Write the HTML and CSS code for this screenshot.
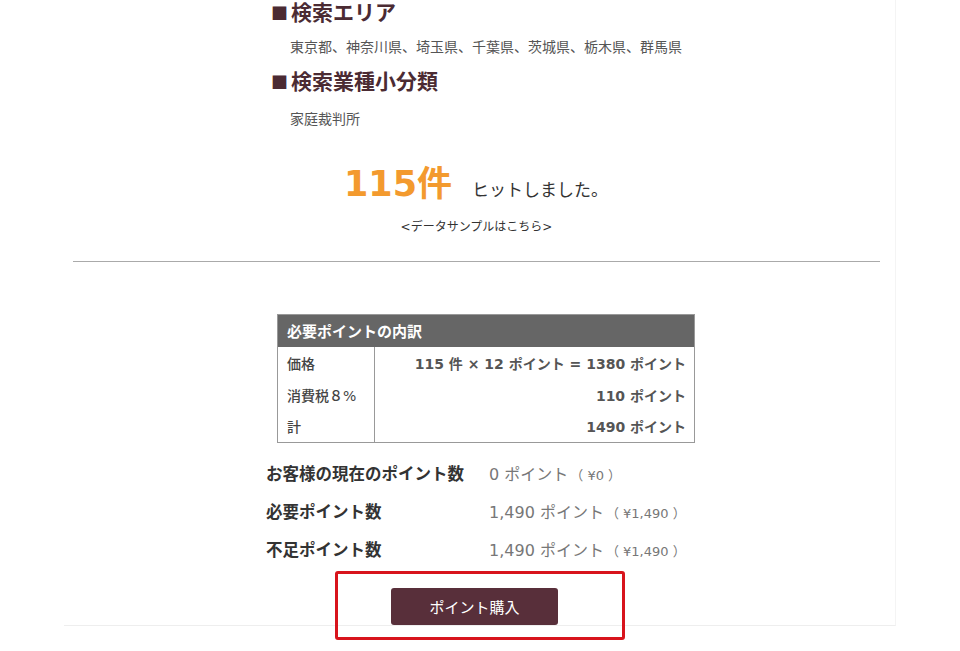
FILE: index.html
```html
<!DOCTYPE html>
<html lang="ja">
<head>
    <meta charset="UTF-8">
    <meta name="viewport" content="width=device-width, initial-scale=1.0">
    <title>ポイント購入</title>
    <link rel="stylesheet" href="styles.css">
</head>
<body>
    <div class="panel">
        <!-- 検索条件 -->
        <div class="search-info">
            <h2 class="cond-title"><span class="mark">■</span>検索エリア</h2>
            <p class="cond-text">東京都、神奈川県、埼玉県、千葉県、茨城県、栃木県、群馬県</p>
            <h2 class="cond-title"><span class="mark">■</span>検索業種小分類</h2>
            <p class="cond-text">家庭裁判所</p>
        </div>

        <div class="hit-line">
            <span class="hit-count">115件</span>
            <span class="hit-text">ヒットしました。</span>
        </div>
        <p class="sample-link">&lt;データサンプルはこちら&gt;</p>

        <hr class="divider">

        <!-- 内訳 -->
        <table class="breakdown">
            <thead>
                <tr>
                    <th colspan="2">必要ポイントの内訳</th>
                </tr>
            </thead>
            <tbody>
                <tr>
                    <td class="label">価格</td>
                    <td class="value">115 件 × 12 ポイント = 1380 ポイント</td>
                </tr>
                <tr>
                    <td class="label">消費税８%</td>
                    <td class="value">110 ポイント</td>
                </tr>
                <tr>
                    <td class="label">計</td>
                    <td class="value">1490 ポイント</td>
                </tr>
            </tbody>
        </table>

        <div class="summary">
            <div class="summary-label">お客様の現在のポイント数</div>
            <div class="summary-value">0 ポイント<span class="yen">（ ¥0 ）</span></div>
            <div class="summary-label">必要ポイント数</div>
            <div class="summary-value">1,490 ポイント<span class="yen">（ ¥1,490 ）</span></div>
            <div class="summary-label">不足ポイント数</div>
            <div class="summary-value">1,490 ポイント<span class="yen">（ ¥1,490 ）</span></div>
        </div>

        <div class="buy-area">
            <a href="#" class="buy-button">ポイント購入</a>
            <div class="highlight"></div>
        </div>
    </div>
</body>
</html>
```

FILE: styles.css
```css
* {
    margin: 0;
    padding: 0;
    box-sizing: border-box;
}

body {
    background-color: #fff;
    color: #555;
    font-family: "DejaVu Sans", "Noto Sans CJK JP", sans-serif;
    min-height: 651px;
}

.panel {
    width: 832px;
    margin: 0 auto;
    border-right: 1px solid #f4f4f4;
    border-bottom: 1px solid #eee;
}

/* 検索条件 */
.search-info {
    margin-top: -3px;
    padding-left: 206px;
}

.cond-title {
    font-family: "Noto Sans CJK JP", sans-serif;
    font-size: 21px;
    line-height: 28px;
    font-weight: bold;
    color: #4b2b33;
}

.cond-title .mark {
    font-size: 17px;
    line-height: 1;
    margin: 0 3px 0 1px;
}

.cond-text {
    font-family: "Noto Sans CJK JP", sans-serif;
    font-size: 14px;
    line-height: 20px;
    color: #555;
    margin: 11px 0 10px 20px;
}

.cond-text:last-child {
    margin-bottom: 0;
    margin-top: 14px;
}

/* ヒット件数 */
.hit-line {
    display: flex;
    align-items: baseline;
    gap: 20px;
    padding-left: 280px;
    margin-top: 34px;
    line-height: 44px;
}

.hit-count {
    font-size: 35px;
    font-weight: bold;
    color: #f39a2e;
}

.hit-text {
    font-family: "Noto Sans CJK JP", sans-serif;
    font-size: 17px;
    color: #333;
}

.sample-link {
    text-align: center;
    font-size: 12px;
    line-height: 18px;
    color: #333;
    margin-top: 7px;
    padding-right: 6px;
}

.divider {
    border: none;
    border-top: 1px solid #aaa;
    margin: 25px 15px 0 9px;
}

/* 内訳テーブル */
.breakdown {
    width: 418px;
    margin: 52px 0 0 213px;
    border-collapse: collapse;
    border: 1px solid #999;
    font-size: 14px;
}

.breakdown th {
    background-color: #666;
    color: #fff;
    text-align: left;
    font-size: 15px;
    height: 32px;
    padding: 0 9px;
}

.breakdown td {
    height: 32px;
    padding: 0 8px 0 9px;
    color: #555;
}

.breakdown .label {
    width: 97px;
    border-right: 1px solid #999;
    font-weight: 500;
    color: #444;
}

.breakdown .value {
    text-align: right;
    font-weight: bold;
}

/* ポイント数 */
.summary {
    display: grid;
    grid-template-columns: 223px auto;
    grid-auto-rows: 38px;
    align-items: center;
    margin: 11px 0 0 202px;
}

.summary-label {
    font-family: "Noto Sans CJK JP", sans-serif;
    font-size: 16.5px;
    font-weight: bold;
    color: #333;
}

.summary-value {
    font-size: 16px;
    color: #777;
}

.yen {
    font-size: 13px;
    margin-left: 2px;
}

/* 購入ボタン */
.buy-area {
    position: relative;
    margin-top: 20px;
    height: 37px;
}

.buy-button {
    display: flex;
    align-items: center;
    justify-content: center;
    width: 167px;
    height: 37px;
    margin-left: 327px;
    background-color: #582f3a;
    color: #fff;
    font-family: "Noto Sans CJK JP", sans-serif;
    font-size: 15px;
    text-decoration: none;
    border-radius: 3px;
}

.highlight {
    position: absolute;
    top: -17px;
    left: 271px;
    width: 290px;
    height: 69px;
    border: 3px solid #d8141c;
    border-radius: 3px;
    pointer-events: none;
}
```
